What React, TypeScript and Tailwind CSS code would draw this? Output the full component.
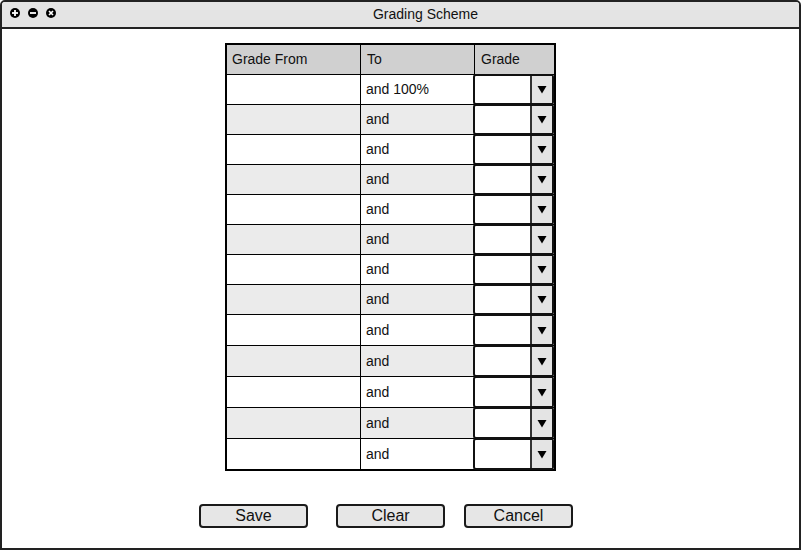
import React from "react";

const rows = Array.from({ length: 13 }, (_, i) => i);

function Select() {
  return (
    <div className="absolute -top-px -left-px -bottom-px right-0 flex border-2 border-[#111] rounded-[3px] bg-white">
      <div className="flex-1" />
      <div className="w-[22px] border-l-2 border-[#333] bg-[#e4e4e4] flex items-center justify-center">
        <svg width="10" height="9" viewBox="0 0 10 9">
          <polygon points="0.5,1 9.5,1 5,8.5" fill="#000" />
        </svg>
      </div>
    </div>
  );
}

function Btn({ label }: { label: string }) {
  return (
    <button className="w-[109px] h-[24px] border-2 border-[#1a1a1a] rounded-[4px] bg-[#e6e6e6] text-[16px] leading-none text-[#111] flex items-center justify-center">
      {label}
    </button>
  );
}

export default function App() {
  return (
    <div
      className="w-[801px] h-[550px] border-2 border-[#222] rounded-t-[5px] bg-white flex flex-col overflow-hidden"
      style={{ fontFamily: '"Liberation Sans", Arial, sans-serif' }}
    >
      <div className="h-[27px] shrink-0 bg-[#e4e4e4] border-b-2 border-[#222] flex items-center relative">
        <div className="absolute left-[8px] top-[6px] flex gap-[8px]">
          <svg width="10" height="10" viewBox="0 0 10 10">
            <circle cx="5" cy="5" r="5" fill="#000" />
            <rect x="2" y="4.1" width="6" height="1.8" fill="#fff" />
            <rect x="4.1" y="2" width="1.8" height="6" fill="#fff" />
          </svg>
          <svg width="10" height="10" viewBox="0 0 10 10">
            <circle cx="5" cy="5" r="5" fill="#000" />
            <rect x="2" y="4.1" width="6" height="1.8" fill="#fff" />
          </svg>
          <svg width="10" height="10" viewBox="0 0 10 10">
            <circle cx="5" cy="5" r="5" fill="#000" />
            <path d="M3 3 L7 7 M7 3 L3 7" stroke="#fff" strokeWidth="1.7" />
          </svg>
        </div>
        <div className="flex-1 pl-[50px] text-center text-[14px] text-[#111]">Grading Scheme</div>
      </div>

      <div className="flex flex-col pt-[14px]">
        <div className="ml-[223px] w-[331px] border-2 border-[#000] text-[14px] text-[#111]">
          <div className="flex h-[29px] bg-[#d0d0d0]">
            <div className="w-[133px] pl-[5px] flex items-center">Grade From</div>
            <div className="w-[114px] border-l border-black pl-[6px] flex items-center">To</div>
            <div className="flex-1 border-l border-black pl-[6px] flex items-center">Grade</div>
          </div>
          {rows.map((i) => (
            <div
              key={i}
              className={`flex border-t border-black ${i >= 8 ? "h-[31px]" : "h-[30px]"} ${
                i % 2 === 1 ? "bg-[#ebebeb]" : "bg-white"
              }`}
            >
              <div className="w-[133px]" />
              <div className="w-[114px] border-l border-black pl-[5px] flex items-center">
                {i === 0 ? "and 100%" : "and"}
              </div>
              <div className="flex-1 relative">
                <Select />
              </div>
            </div>
          ))}
        </div>

        <div className="mt-[33px] ml-[197px] flex">
          <Btn label="Save" />
          <div className="w-[28px]" />
          <Btn label="Clear" />
          <div className="w-[19px]" />
          <Btn label="Cancel" />
        </div>
      </div>
    </div>
  );
}
